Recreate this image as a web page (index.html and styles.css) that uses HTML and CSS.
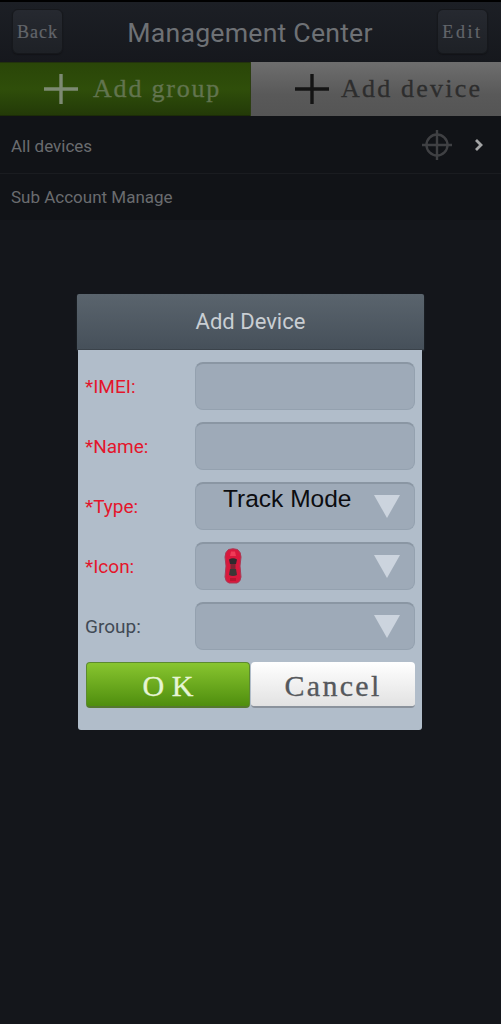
FILE: index.html
```html
<!DOCTYPE html>
<html lang="en">
<head>
<meta charset="utf-8">
<title>Management Center</title>
<link rel="stylesheet" href="styles.css">
</head>
<body>
<div class="page">
  <header class="header">
    <button class="nav-btn back">Back</button>
    <h1 class="title">Management Center</h1>
    <button class="nav-btn edit">Edit</button>
  </header>
  <div class="actions">
    <div class="action action-green">
      <svg class="plus" viewBox="0 0 34 30"><path d="M0 15H34M17 0V30" stroke="#7d8a73" stroke-width="3.4" fill="none"/></svg>
      <span>Add group</span>
    </div>
    <div class="action action-grey">
      <svg class="plus" viewBox="0 0 34 30"><path d="M0 15H34M17 0V30" stroke="#141414" stroke-width="3.4" fill="none"/></svg>
      <span>Add device</span>
    </div>
  </div>
  <div class="row row-first">
    <span>All devices</span>
    <svg class="target" viewBox="0 0 30 30"><circle cx="15" cy="15" r="10.5" fill="none" stroke="#3f4043" stroke-width="2.4"/><path d="M15 0V30M0 15H30" stroke="#3f4043" stroke-width="2.4"/></svg>
    <svg class="chevron" viewBox="0 0 10 14"><path d="M2 2l5 5-5 5" fill="none" stroke="#a3a4a5" stroke-width="2.8"/></svg>
  </div>
  <div class="row row-second"><span>Sub Account Manage</span></div>

  <div class="dialog">
    <div class="dialog-title">Add Device</div>
    <div class="dialog-body">
      <div class="field">
        <label class="label req">*IMEI:</label>
        <div class="control"></div>
      </div>
      <div class="field">
        <label class="label req">*Name:</label>
        <div class="control"></div>
      </div>
      <div class="field">
        <label class="label req">*Type:</label>
        <div class="control select"><span class="value">Track Mode</span><i class="tri"></i></div>
      </div>
      <div class="field">
        <label class="label req">*Icon:</label>
        <div class="control select">
          <svg class="car" viewBox="0 0 18 36">
            <path d="M4.500 1.500Q9 0 13.500 1.500Q17 4 17 9L16 18L17 29Q16.500 34 13 35H5Q1.500 34 1 29L2 18L1 9Q1 4 4.500 1.500Z" fill="#d9183c" stroke="#a93a55" stroke-width="1"/>
            <path d="M5 11.500Q9 9 13 11.500L12 16H6Z" fill="#2f2a2e"/>
            <rect x="6.500" y="16" width="5" height="5" fill="#7e2332"/>
            <path d="M6 21H12L13 27Q9 29 5 27Z" fill="#3c3736"/>
            <path d="M7 3.500H11L12 8H6Z" fill="#ef3b57"/>
            <path d="M6 30H12V33H6Z" fill="#b81530"/>
          </svg>
          <i class="tri"></i>
        </div>
      </div>
      <div class="field">
        <label class="label">Group:</label>
        <div class="control select"><i class="tri"></i></div>
      </div>
      <div class="buttons">
        <button class="btn btn-ok">O K</button>
        <button class="btn btn-cancel">Cancel</button>
      </div>
    </div>
  </div>
</div>
</body>
</html>
```
FILE: styles.css
```css
* { box-sizing: border-box; }
html, body { margin: 0; padding: 0; }
body {
  background: #14161b;
  font-family: Roboto, "Liberation Sans", sans-serif;
}
.page {
  position: relative;
  width: 501px;
  height: 1024px;
  overflow: hidden;
  background: #14161b;
}
.header {
  height: 62px;
  padding: 7px 13px 8px 12px;
  display: flex;
  align-items: center;
  justify-content: space-between;
  border-top: 2px solid #000;
  background: linear-gradient(#1c1f25, #16181d);
}
.nav-btn {
  width: 51px;
  height: 45px;
  margin: 0;
  padding: 0;
  border: 1px solid #16181c;
  border-radius: 6px;
  background: linear-gradient(#262930, #1e2126);
  box-shadow: 0 1px 1px #121317;
  color: #62656a;
  font: 18px/1 "Liberation Serif", serif;
  -webkit-text-stroke: .2px currentColor;
}
.back { letter-spacing: 1px; }
.edit { letter-spacing: 2.6px; }
.title {
  margin: 0;
  padding-top: 2px;
  font-size: 26.7px;
  font-weight: 400;
  line-height: 30px;
  color: #6e7175;
  letter-spacing: .2px;
}
.actions {
  display: flex;
  height: 54px;
}
.action {
  width: 250px;
  display: flex;
  align-items: center;
  font: 26px/1 "Liberation Serif", serif;
  -webkit-text-stroke: .3px currentColor;
}
.action + .action { width: 251px; border-left: 1px solid #2c3e12; }
.action-green {
  padding-left: 44px;
  background: linear-gradient(#2a4608, #2f4e0a 50%, #233a08);
  border-top: 1px solid #22330c;
  border-bottom: 1px solid #1c2c08;
  color: #62744f;
  letter-spacing: 1.800px;
}
.action-grey {
  padding-left: 44px;
  background: linear-gradient(#6e6e6e, #595959 60%, #555);
  color: #2d2d2d;
  letter-spacing: 2.200px;
}
.plus { width: 34px; height: 30px; margin-right: 15px; flex: none; }
.action-grey .plus { margin-right: 12px; }
.row {
  display: flex;
  align-items: center;
  padding-left: 11px;
  font-size: 17px;
  color: #6a6c6f;
  background: #111317;
}
.row-first {
  height: 58px;
  padding: 3px 17px 0 11px;
  border-bottom: 1px solid #1a1c20;
}
.row-first span { flex: 1; }
.row-second { height: 46px; padding-bottom: 1px; }
.target { width: 30px; height: 30px; margin: 0 22px 3px 0; }
.chevron { width: 10px; height: 14px; margin-bottom: 3px; }
.dialog {
  position: absolute;
  left: 77px;
  top: 294px;
  width: 347px;
}
.dialog-title {
  height: 56px;
  display: flex;
  align-items: center;
  justify-content: center;
  background: linear-gradient(#5a646d, #46505a);
  border-bottom: 1px solid #3b434b;
  border-radius: 2px 2px 0 0;
  box-shadow: 0 1px 2px rgba(60, 70, 80, .6);
  color: #c9ced3;
  font-size: 22px;
}
.dialog-body {
  width: 344px;
  margin-left: 1px;
  height: 380px;
  padding: 12px 7px 0 7px;
  background: #b1bdca;
  border-radius: 0 0 3px 3px;
}
.field {
  display: flex;
  align-items: center;
  height: 48px;
  margin-bottom: 12px;
}
.label {
  width: 110px;
  font-size: 19px;
  color: #414a55;
  padding-top: 1px;
}
.label.req { color: #e4152b; }
.control {
  position: relative;
  width: 220px;
  height: 48px;
  border-radius: 8px;
  background: #9eaab8;
  border: 1px solid #94a1af;
  border-top: 2px solid #8a96a3;
}
.select {
  display: flex;
  align-items: center;
  background: #9eaab8;
}
.value {
  position: absolute;
  left: 27px;
  top: 1px;
  font: 24.500px/28px "Liberation Sans", Arial, sans-serif;
  color: #0c0d10;
}
.tri {
  position: absolute;
  right: 14px;
  top: 11px;
  width: 0;
  height: 0;
  border-left: 13px solid transparent;
  border-right: 13px solid transparent;
  border-top: 23px solid #ccd4de;
}
.car {
  position: absolute;
  left: 28px;
  top: 4px;
  width: 18px;
  height: 36px;
}
.buttons {
  display: flex;
  gap: 1px;
  margin-left: 1px;
}
.btn {
  width: 164px;
  height: 46px;
  margin: 0;
  padding: 3px 0 0;
  border-radius: 4px;
  font: 30px/1 "Liberation Serif", serif;
  -webkit-text-stroke: .3px currentColor;
}
.btn-ok {
  border: 1px solid #5c8a2e;
  border-bottom: 2px solid #55782f;
  background: linear-gradient(#88c52f, #4f8e0e);
  color: #e6f5d4;
  letter-spacing: 0;
}
.btn-cancel {
  border: 0;
  border-bottom: 2px solid #8a929c;
  background: linear-gradient(#fff, #e2e2e2);
  color: #55585c;
  letter-spacing: 2.300px;
}
```
